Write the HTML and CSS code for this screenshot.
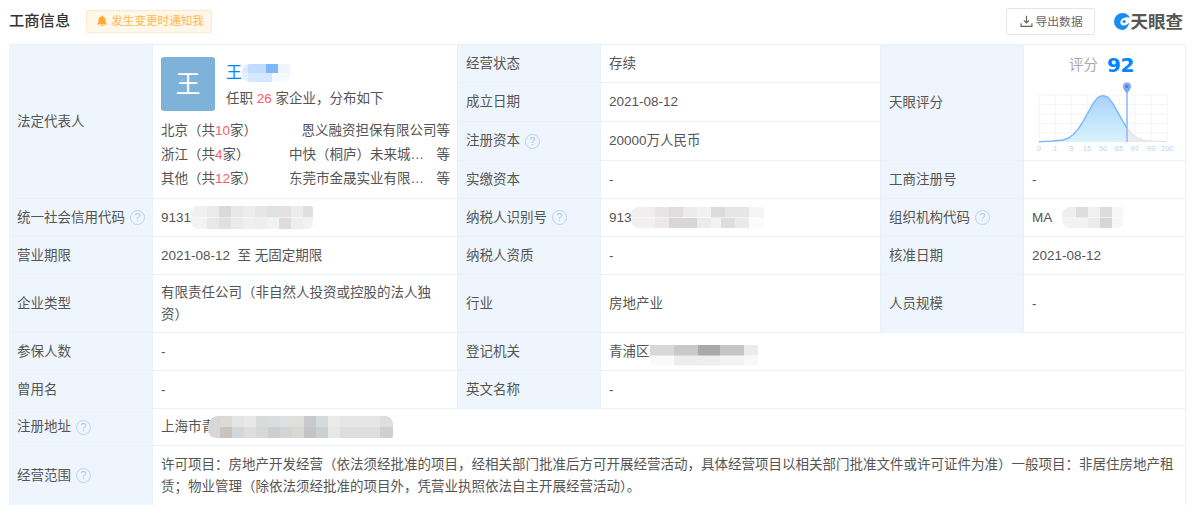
FILE: index.html
```html
<!DOCTYPE html>
<html lang="zh-CN">
<head>
<meta charset="utf-8">
<title>工商信息</title>
<link rel="stylesheet" href="styles.css">
</head>
<body>
<header class="head">
  <div class="head-left">
    <h2 class="title">工商信息</h2>
    <div class="notify">
      <svg class="bell" viewBox="0 0 12 12"><path d="M6 .6c.5 0 .8.3.8.8 1.800.4 2.800 1.800 2.800 3.600v2.400l1 1.400v.6H1.400v-.6l1-1.400V5c0-1.800 1-3.200 2.800-3.600 0-.5.3-.8.8-.8zM4.700 10.300h2.600C7.200 11 6.700 11.500 6 11.500s-1.200-.5-1.300-1.200z"/></svg>
      <span>发生变更时通知我</span>
    </div>
  </div>
  <div class="head-right">
    <div class="export">
      <svg class="export-icon" viewBox="0 0 12 12"><path d="M6 .8v6.400M3.600 5 6 7.400 8.400 5M1 7.500v3h10v-3"/></svg>
      <span>导出数据</span>
    </div>
    <div class="logo">
      <svg class="logo-mark" viewBox="0 0 16 16"><circle cx="8" cy="8" r="8" fill="#1a8cf0"/><path d="M16 4.500C12.500 3.200 7.500 4 6.200 7.500c-.7 2 .3 4 2.300 4.300 2.500.3 4.500-1 6-3-.8 3.500-2.500 5.500-4.500 7.200h6V4.500z" fill="#fff"/><circle cx="9.500" cy="8" r="1.500" fill="#1a8cf0"/></svg>
      <span class="logo-text">天眼查</span>
    </div>
  </div>
</header>

<main class="table">
  <div class="cell label legal">法定代表人</div>
  <div class="cell person">
    <div class="person-top">
      <div class="avatar">王</div>
      <div class="person-info">
        <div class="person-name"><span>王</span><i class="mosaic m-name"></i></div>
        <div class="person-jobs">任职 <em>26</em> 家企业，分布如下</div>
      </div>
    </div>
    <div class="dist">
      <div class="dist-row"><span>北京（共<em>10</em>家）</span><span class="dist-co">恩义融资担保有限公司等</span></div>
      <div class="dist-row"><span>浙江（共<em>4</em>家）</span><span class="dist-co wide"><span>中快（桐庐）未来城…</span><span>等</span></span></div>
      <div class="dist-row"><span>其他（共<em>12</em>家）</span><span class="dist-co wide"><span>东莞市金晟实业有限…</span><span>等</span></span></div>
    </div>
  </div>

  <div class="cell label">经营状态</div>
  <div class="cell">存续</div>
  <div class="cell label tall3">天眼评分</div>
  <div class="cell score tall3">
    <div class="score-line"><span class="score-name">评分</span><span class="score-num">92</span></div>
    <svg class="chart" viewBox="1036 78 140 76">
      <defs>
        <linearGradient id="bluefill" x1="0" y1="0" x2="0" y2="1">
          <stop offset="0" stop-color="#a9d3fb"/><stop offset="1" stop-color="#d9f3fc"/>
        </linearGradient>
      </defs>
      <path class="grid-line" d="M1039 95v47M1055 95v47M1071 95v47M1087 95v47M1103 95v47M1119 95v47M1135 95v47M1151 95v47M1167 95v47M1039 95h128M1039 104.500h128M1039 114h128M1039 123.500h128M1039 133h128"/>
      <path class="fill-gray" d="M1127 128 1128 129.200 1133 134.800 1138 138.300 1143 140 1153 141 1166 141.700V142H1127z"/>
      <path fill="url(#bluefill)" d="M1039 141.700 1053 141 1063 140 1068 138.300 1073 134.800 1078 129.200 1083 121.600 1088 112.700 1093 103.600 1098 97.400Q1103 94 1108 97.400L1113 103.600 1118 112.700 1123 121.600 1127 128V142H1039z"/>
      <path class="curve" d="M1039 141.700 1053 141 1063 140 1068 138.300 1073 134.800 1078 129.200 1083 121.600 1088 112.700 1093 103.600 1098 97.400Q1103 94 1108 97.400L1113 103.600 1118 112.700 1123 121.600 1127 128"/>
      <path class="curve-rest" d="M1127 128 1133 134.800 1138 138.300 1143 140 1153 141 1166 141.700"/>
      <path class="marker-line" d="M1127 88V142"/>
      <path class="marker-pin" d="M1127 93.500c-2.200-2.500-4-4.500-4-7a4 4 0 0 1 8 0c0 2.500-1.800 4.500-4 7z"/>
      <circle class="marker-dot" cx="1127" cy="86.500" r="1.500"/>
      <g class="tick">
        <text x="1039" y="151">0</text><text x="1055" y="151">1</text><text x="1071" y="151">3</text><text x="1087" y="151">15</text><text x="1103" y="151">50</text><text x="1119" y="151">85</text><text x="1135" y="151">97</text><text x="1151" y="151">99</text><text x="1167" y="151">100</text>
      </g>
    </svg>
  </div>

  <div class="cell label">成立日期</div>
  <div class="cell">2021-08-12</div>

  <div class="cell label">注册资本<span class="help">?</span></div>
  <div class="cell">20000万人民币</div>

  <div class="cell label">实缴资本</div>
  <div class="cell">-</div>
  <div class="cell label">工商注册号</div>
  <div class="cell">-</div>

  <div class="cell label">统一社会信用代码<span class="help">?</span></div>
  <div class="cell"><span>9131</span><i class="mosaic m-credit"></i></div>
  <div class="cell label">纳税人识别号<span class="help">?</span></div>
  <div class="cell"><span>913</span><i class="mosaic m-tax"></i></div>
  <div class="cell label">组织机构代码<span class="help">?</span></div>
  <div class="cell"><span>MA</span><i class="mosaic m-org"></i></div>

  <div class="cell label">营业期限</div>
  <div class="cell">2021-08-12&nbsp; 至 无固定期限</div>
  <div class="cell label">纳税人资质</div>
  <div class="cell">-</div>
  <div class="cell label">核准日期</div>
  <div class="cell">2021-08-12</div>

  <div class="cell label">企业类型</div>
  <div class="cell wrap">有限责任公司（非自然人投资或控股的法人独资）</div>
  <div class="cell label">行业</div>
  <div class="cell">房地产业</div>
  <div class="cell label">人员规模</div>
  <div class="cell">-</div>

  <div class="cell label">参保人数</div>
  <div class="cell">-</div>
  <div class="cell label">登记机关</div>
  <div class="cell span3"><span>青浦区</span><i class="mosaic m-reg"></i></div>

  <div class="cell label">曾用名</div>
  <div class="cell">-</div>
  <div class="cell label">英文名称</div>
  <div class="cell span3">-</div>

  <div class="cell label">注册地址<span class="help">?</span></div>
  <div class="cell span5"><span>上海市青</span><i class="mosaic m-addr"></i></div>

  <div class="cell label">经营范围<span class="help">?</span></div>
  <div class="cell span5 scope">许可项目：房地产开发经营（依法须经批准的项目，经相关部门批准后方可开展经营活动，具体经营项目以相关部门批准文件或许可证件为准）一般项目：非居住房地产租赁；物业管理（除依法须经批准的项目外，凭营业执照依法自主开展经营活动）。</div>
</main>
</body>
</html>
```
FILE: styles.css
```css
* { box-sizing: border-box; }

html, body { margin: 0; height: 521px; overflow: hidden; background: #fff; }

body {
  padding-left: 9px;
  font-family: "Liberation Sans", "Noto Sans CJK SC", sans-serif;
  font-size: 13.500px;
  line-height: 20px;
  color: #555;
}

/* header */
.head {
  width: 1177px;
  height: 44px;
  display: flex;
  justify-content: space-between;
  align-items: flex-start;
}
.head-left { display: flex; align-items: center; margin-top: 9px; height: 24px; }
.title { margin: 0; font-size: 15.300px; font-weight: 500; color: #333; }
.notify {
  margin-left: 16px;
  width: 126px;
  height: 23px;
  display: flex;
  align-items: center;
  gap: 3px;
  padding-left: 9px;
  background: #fff7ea;
  border: 1px solid #ffe9cb;
  border-radius: 2px;
  font-size: 11.600px;
  color: #ffb84d;
}
.bell { width: 12px; height: 12px; fill: #ffab2e; }

.head-right { display: flex; align-items: flex-start; margin-top: 8px; padding-right: 3px; }
.export {
  width: 89px;
  height: 27px;
  display: flex;
  align-items: center;
  gap: 3px;
  padding-left: 13px;
  border: 1px solid #e6e6e6;
  border-radius: 2px;
  font-size: 11.800px;
  color: #666;
}
.export-icon { width: 13px; height: 13px; fill: none; stroke: #666; stroke-width: 1.100; }
.logo { margin-left: 19px; height: 27px; display: flex; align-items: center; gap: 0; }
.logo-mark { width: 17px; height: 17px; }
.logo-text { font-size: 17.500px; font-weight: 700; color: #555; letter-spacing: 0; }

/* table */
.table {
  width: 1177px;
  height: 461px;
  padding: 1px 1px 1px 0;
  display: grid;
  gap: 1px;
  grid-template-columns: 143px 304px 142px 279px 142px 161px;
  grid-template-rows: 37px 38px 38px 37px 37px 37px 57px 37px 37px 36px 59px;
  background: #e9f1fa;
}
.cell {
  display: flex;
  align-items: center;
  padding: 0 8px;
  background: #fff;
  min-width: 0;
}
.label { background: #eef5fc; white-space: nowrap; padding-right: 0; }
.legal { grid-row: span 4; }
.person { grid-row: span 4; display: block; padding: 12px 7px 0 8px; }
.tall3 { grid-row: span 3; }
.span3 { grid-column: span 3; }
.span5 { grid-column: span 5; }
.wrap { padding-right: 20px; line-height: 22px; }
.scope { padding-right: 4px; line-height: 22px; }

.help {
  flex: none;
  width: 15px;
  height: 15px;
  margin-left: 5px;
  display: inline-flex;
  align-items: center;
  justify-content: center;
  border: 1px solid #b5d5ef;
  border-radius: 50%;
  font-size: 10.500px;
  line-height: 13px;
  color: #a5cbea;
}

/* legal person */
.person-top { display: flex; height: 54px; }
.avatar {
  width: 54px;
  height: 54px;
  display: flex;
  align-items: center;
  justify-content: center;
  background: #7fb2d9;
  border-radius: 3px;
  font-size: 25px;
  color: #fff;
}
.person-info { margin-left: 11px; }
.person-name { height: 22px; margin-top: 5px; display: flex; align-items: center; font-size: 16px; color: #0084ff; }
.person-jobs { margin-top: 5px; }
em { font-style: normal; color: #ff5a5f; }

.dist { margin-top: 8px; }
.dist-row { height: 24px; display: flex; justify-content: space-between; align-items: center; }
.dist-co { display: flex; justify-content: flex-end; }
.dist-co.wide { width: 161px; justify-content: space-between; }

/* score */
.score { display: block; padding: 0; position: relative; }
.score-line { height: 39px; padding-left: 45px; display: flex; align-items: center; gap: 9px; }
.score-name { font-size: 14.500px; color: #aaa; }
.score-num { font-size: 20px; font-weight: 700; color: #0084ff; font-family: "DejaVu Sans", sans-serif; letter-spacing: -.5px; }
.chart { display: block; width: 140px; height: 76px; margin: -6px 0 0 12px; }
.grid-line { fill: none; stroke: #f3f4f6; stroke-width: 1; }
.fill-gray { fill: #ececec; }
.curve { fill: none; stroke: #7fb8fb; stroke-width: 1.500; }
.curve-rest { fill: none; stroke: #e3e3e3; stroke-width: 1.200; }
.marker-line { stroke: #8cb4fb; stroke-width: 1.500; }
.marker-pin { fill: #7fa8f5; }
.marker-dot { fill: #3f78e8; }
.tick text { font-family: "Liberation Sans", sans-serif; font-size: 7.500px; fill: #bcd3f2; text-anchor: middle; }

/* redaction mosaics */
.mosaic {
  display: block;
  flex: none;
  background-repeat: no-repeat;
  background-size: 100% 50%;
  background-position: top, bottom;
  border-radius: 8px 2px 6px 8px;
}
.m-name {
  width: 48px; height: 18px; margin-left: 0;
  background-image:
    linear-gradient(90deg, #dceaff 0 6px, #c2dcff 6px 24px, #7db8ff 24px 36px, #eef5ff 36px 48px),
    linear-gradient(90deg, #e6f0ff 0 6px, #d5e6ff 6px 30px, #f6faff 30px 48px);
}
.m-credit {
  width: 122px; height: 23px;
  background-image:
    linear-gradient(90deg, #f1eff0 0 16px, #ece9e9 16px 28px, #dcd8da 28px 40px, #e8e8e8 40px 52px, #ececec 52px 64px, #e6e6e4 64px 76px, #dde2e3 76px 88px, #e4dfe0 88px 100px, #ececec 100px 112px, #e0dfdf 112px 122px),
    linear-gradient(90deg, #f3f3f3 0 16px, #e8e8e8 16px 28px, #dfe0e2 28px 40px, #ebe9e9 40px 52px, #f0efef 52px 64px, #eeeeee 64px 76px, #f2f2f2 76px 88px, #dfdcdd 88px 100px, #eeeeef 100px 112px, #f2f2f2 112px 122px);
}
.m-tax {
  width: 133px; height: 21px; margin-left: -1px;
  background-image:
    linear-gradient(90deg, #f0eeee 0 24px, #e6e4e4 24px 38px, #dfdddd 38px 52px, #ececec 52px 66px, #f1f1f1 66px 80px, #dcdcdc 80px 94px, #e6e6e6 94px 118px, #f5f5f5 118px 133px),
    linear-gradient(90deg, #f1efef 0 24px, #ece8ea 24px 38px, #d8d6d6 38px 66px, #ececec 66px 80px, #f1f1f1 80px 90px, #dedede 90px 104px, #ece9ea 104px 118px, #fbfbfb 118px 133px);
}
.m-org {
  width: 61px; height: 21px; margin-left: 10px;
  background-image:
    linear-gradient(90deg, #f0efef 0 14px, #dedcdc 14px 26px, #f0f0f0 26px 38px, #dcdcdc 38px 50px, #f6f6f6 50px 61px),
    linear-gradient(90deg, #f3f3f3 0 26px, #ecebeb 26px 38px, #d9d7d6 38px 50px, #f6f6f6 50px 61px);
}
.m-reg {
  width: 108px; height: 21px; border-radius: 0; margin-top: 7px;
  background-image:
    linear-gradient(90deg, #d8d8d8 0 24px, #c9c9c9 24px 48px, #a9a9a9 48px 70px, #c6c6c6 70px 94px, #ececec 94px 108px),
    linear-gradient(90deg, #fafafa 0 24px, #ededed 24px 48px, #eeeeee 48px 70px, #f4f4f4 70px 94px, #f8f8f8 94px 108px);
}
.m-addr {
  width: 185px; height: 22px; margin-left: -7px;
  border-radius: 10px 8px 2px 8px;
  background-image:
    linear-gradient(90deg, #d8d8d8 0 12px, #dcdad6 12px 24px, #e2e4e6 24px 36px, #e8e8e8 36px 48px, #d9dadb 48px 60px, #dcdcdc 60px 72px, #dfe0e1 72px 84px, #dededd 84px 96px, #c9c9cc 96px 108px, #d6dadc 108px 120px, #ebebe9 120px 132px, #e6e6e6 132px 172px, #dedede 172px 185px),
    linear-gradient(90deg, #d8d8d8 0 12px, #c9c5be 12px 24px, #d3d7da 24px 36px, #dfdedb 36px 48px, #d6d8d8 48px 60px, #d0cdce 60px 72px, #d2d5d6 72px 84px, #d9d8d3 84px 96px, #c4c3c6 96px 108px, #ccd0d1 108px 120px, #e8e8e5 120px 132px, #dfdede 132px 172px, #cfced3 172px 185px);
}
```
